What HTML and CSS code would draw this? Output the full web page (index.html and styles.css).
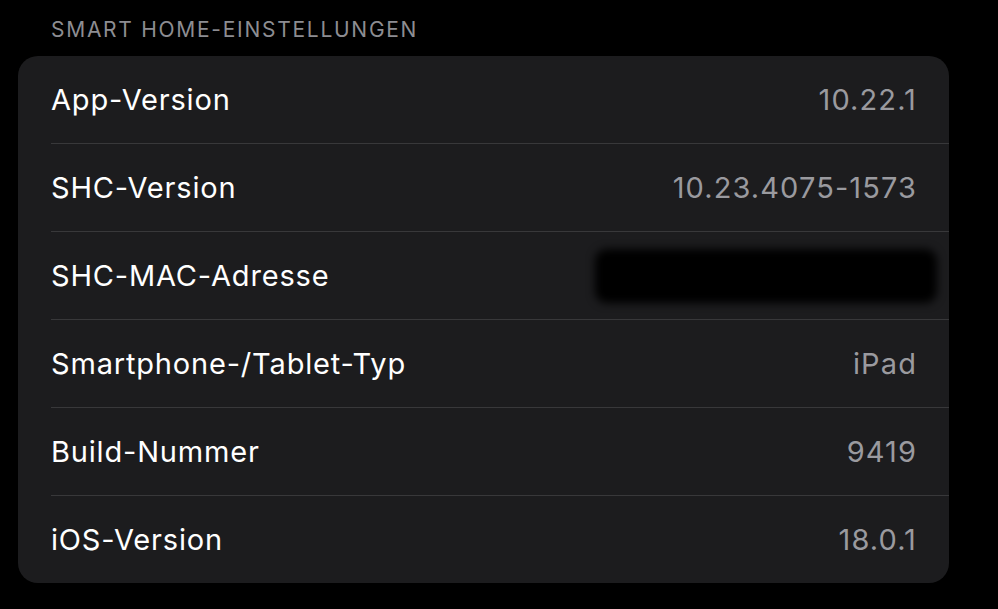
FILE: index.html
```html
<!DOCTYPE html>
<html lang="de">
<head>
<meta charset="utf-8">
<link rel="stylesheet" href="styles.css">
</head>
<body>
<div class="section">
  <div class="section-title">SMART HOME-EINSTELLUNGEN</div>
  <div class="card">
    <div class="row"><span class="label">App-Version</span><span class="value">10.22.1</span></div>
    <div class="row"><span class="label">SHC-Version</span><span class="value">10.23.4075-1573</span></div>
    <div class="row"><span class="label">SHC-MAC-Adresse</span><span class="redacted"></span></div>
    <div class="row"><span class="label">Smartphone-/Tablet-Typ</span><span class="value">iPad</span></div>
    <div class="row"><span class="label">Build-Nummer</span><span class="value">9419</span></div>
    <div class="row last"><span class="label">iOS-Version</span><span class="value">18.0.1</span></div>
  </div>
</div>
</body>
</html>
```
FILE: styles.css
```css
html, body {
  margin: 0;
  padding: 0;
  background: #000;
  width: 998px;
  height: 609px;
  overflow: hidden;
  font-family: Inter, "Noto Sans", sans-serif;
}
.section {
  padding-top: 16px;
}
.section-title {
  padding-left: 51px;
  font-size: 21px;
  line-height: 28px;
  color: #8d8d92;
  letter-spacing: 1.72px;
  height: 40px;
}
.card {
  margin-left: 18px;
  width: 931px;
  background: #1c1c1e;
  border-radius: 20px;
  overflow: hidden;
}
.row {
  margin-left: 33px;
  padding-right: 33px;
  height: 87px;
  border-bottom: 1px solid #38383a;
  display: flex;
  align-items: center;
  justify-content: space-between;
}
.row.last {
  border-bottom: none;
}
.label {
  color: #fff;
  font-size: 29px;
  letter-spacing: 0.82px;
}
.value {
  color: #9a9a9f;
  font-size: 29px;
  letter-spacing: 1.1px;
  margin-right: -1px;
}
.redacted {
  display: block;
  width: 342px;
  height: 54px;
  margin-right: -21px;
  background: #000;
  border-radius: 12px;
  filter: blur(4px);
}
```
